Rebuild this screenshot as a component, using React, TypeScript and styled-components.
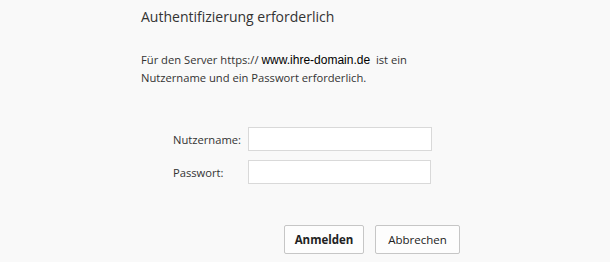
import React from "react";
import styled, { createGlobalStyle } from "styled-components";

const GlobalStyle = createGlobalStyle`
  html, body {
    margin: 0;
    padding: 0;
    background-color: #f9f9f9;
  }
  body {
    font-family: "Open Sans", "Noto Sans", "Liberation Sans", sans-serif;
    color: #222222;
  }
`;

const Dialog = styled.div`
  width: 610px;
  height: 262px;
  box-sizing: border-box;
  padding: 6px 0 0 141px;
  display: flex;
  flex-direction: column;
`;

const Title = styled.h1`
  margin: 0;
  font-size: 14px;
  font-weight: 400;
  line-height: 22px;
  color: #333333;
`;

const Message = styled.p`
  margin: 23px 0 0 0;
  font-size: 11.2px;
  line-height: 18px;
  color: #333333;
`;

// the host name is drawn in a plainer, darker face than the text around it
const Domain = styled.span`
  font-family: "Liberation Sans", Arial, sans-serif;
  font-size: 12px;
  color: #000000;
`;

const Form = styled.div`
  margin: 40px 0 0 32px;
  display: grid;
  grid-template-columns: 75px 184px;
  row-gap: 9px;
  align-items: center;
`;

const Label = styled.label`
  font-size: 11.2px;
  color: #333333;
`;

const Input = styled.input<{ $w?: number }>`
  box-sizing: border-box;
  height: 24px;
  width: ${(p) => p.$w ?? 184}px;
  margin: 0;
  border: 1px solid #d9d9d9;
  background: #ffffff;
  outline: none;
`;

const Actions = styled.div`
  margin-top: 41px;
  width: 319px;
  display: flex;
  justify-content: flex-end;
  gap: 11px;
`;

const Button = styled.button<{ $primary?: boolean; $w: number }>`
  box-sizing: border-box;
  width: ${(p) => p.$w}px;
  height: 29px;
  margin: 0;
  padding: 0;
  border: 1px solid #c6c6c6;
  border-radius: 2px;
  background: #fdfdfd;
  font-family: inherit;
  font-size: 11.5px;
  font-weight: ${(p) => (p.$primary ? 700 : 400)};
  color: #222222;
`;

export default function App() {
  return (
    <>
      <GlobalStyle />
      <Dialog>
        <Title>Authentifizierung erforderlich</Title>
        <Message>
          Für den Server https:// <Domain>www.ihre-domain.de</Domain>&nbsp; ist ein
          <br />
          Nutzername und ein Passwort erforderlich.
        </Message>
        <Form>
          <Label htmlFor="user">Nutzername:</Label>
          <Input id="user" type="text" />
          <Label htmlFor="pass">Passwort:</Label>
          <Input id="pass" type="password" $w={183} />
        </Form>
        <Actions>
          <Button $primary $w={80}>Anmelden</Button>
          <Button $w={85}>Abbrechen</Button>
        </Actions>
      </Dialog>
    </>
  );
}
